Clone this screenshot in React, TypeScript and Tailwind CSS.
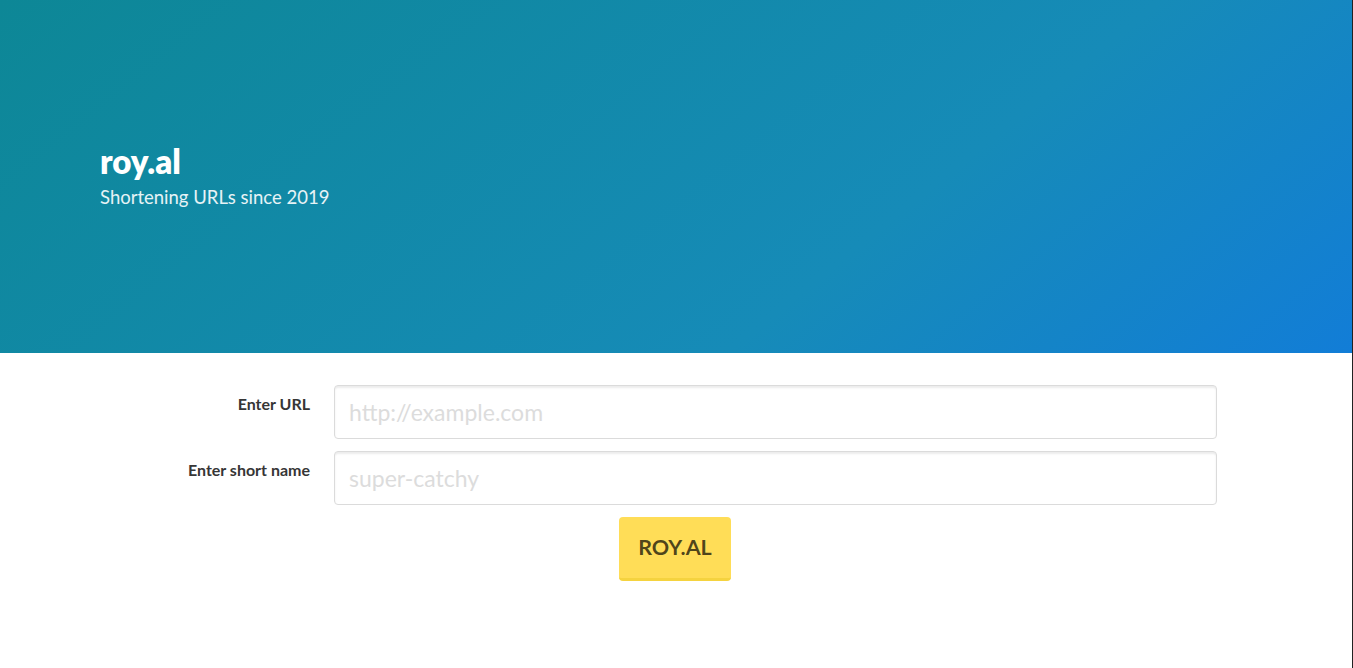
export default function App() {
  return (
    <div className="flex min-h-[668px] bg-white font-['Lato','Liberation_Sans',sans-serif]">
      <div className="flex-1">
        <section className="h-[353px] flex items-center bg-[linear-gradient(141deg,#0d8796_0%,#168bb8_65%,#127dd7_100%)]">
          <div className="w-[1152px] mx-auto pb-[1px]">
            <h1 className="text-[33px] leading-[1.1] font-extrabold text-white">roy.al</h1>
            <p className="mt-[6px] text-[18.5px] leading-[1.25] text-white/90">Shortening URLs since 2019</p>
          </div>
        </section>
        <form className="w-[1084px] mx-auto pt-[32px]" onSubmit={(e) => e.preventDefault()}>
          <div className="flex mb-[12px]">
            <label className="w-[176px] mr-[24px] text-right pt-[7px] text-[16px] font-bold text-[#363636]">Enter URL</label>
            <div className="w-[883px]">
              <input
                type="text"
                placeholder="http://example.com"
                className="w-full h-[54px] px-[14px] rounded-[4px] border border-[#dbdbdb] shadow-[inset_0_2px_2px_rgba(10,10,10,0.08)] text-[23px] text-[#363636] placeholder:text-[#dcdcdc] outline-none"
              />
            </div>
          </div>
          <div className="flex mb-[12px]">
            <label className="w-[176px] mr-[24px] text-right pt-[7px] text-[16px] font-bold text-[#363636]">Enter short name</label>
            <div className="w-[883px]">
              <input
                type="text"
                placeholder="super-catchy"
                className="w-full h-[54px] px-[14px] rounded-[4px] border border-[#dbdbdb] shadow-[inset_0_2px_2px_rgba(10,10,10,0.08)] text-[23px] text-[#363636] placeholder:text-[#dcdcdc] outline-none"
              />
            </div>
          </div>
          <div className="flex justify-center pr-[2px]">
            <button
              type="submit"
              className="w-[112px] h-[64px] rounded-[4px] bg-[#ffdd57] border-b-[3px] border-[#f5d33f] text-[21.5px] font-bold text-black/70"
            >
              ROY.AL
            </button>
          </div>
        </form>
      </div>
      <div className="w-[1px] bg-[#222]" />
    </div>
  );
}
